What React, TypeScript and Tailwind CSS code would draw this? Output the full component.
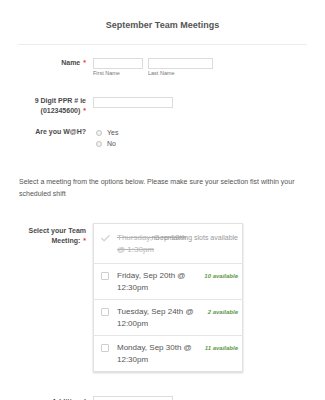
import { Check } from "lucide-react";

type Slot = {
  line1: string;
  line2: string;
  left?: string;
  disabled?: boolean;
};

const slots: Slot[] = [
  { line1: "Thursday, Sep 19th", line2: "@ 1:30pm", disabled: true },
  { line1: "Friday, Sep 20th @", line2: "12:30pm", left: "10 available" },
  { line1: "Tuesday, Sep 24th @", line2: "12:00pm", left: "2 available" },
  { line1: "Monday, Sep 30th @", line2: "12:30pm", left: "11 available" },
];

const Req = () => <span className="ml-[3px] text-[#e33]">*</span>;

const Radio = ({ label }: { label: string }) => (
  <label className="flex items-center gap-[5px] leading-[11px]">
    <span className="ml-[3px] h-[6px] w-[6px] rounded-full border border-[#c4c4c4] bg-[#f2f2f2]" />
    <span>{label}</span>
  </label>
);

const SlotRow = ({ slot, first }: { slot: Slot; first: boolean }) => (
  <div
    className={`relative flex items-start pl-[6px] pr-[4px] ${
      first ? "pt-[8px] pb-[7px]" : "border-t border-[#e6e6e6] pt-[6px] pb-[5px]"
    }`}
  >
    {slot.disabled ? (
      <Check size={11} strokeWidth={3} className="mt-[1px] shrink-0 text-[#d4d4d4]" />
    ) : (
      <span className="mt-[2px] ml-[1px] mr-[2px] h-[8px] w-[8px] shrink-0 rounded-[1px] border border-[#cfcfcf] bg-white" />
    )}
    <div
      className={`ml-[6px] flex-1 text-[8px] leading-[12px] ${
        slot.disabled ? "text-[#b5b5b5] line-through" : "text-[#555]"
      }`}
    >
      <div>{slot.line1}</div>
      <div>{slot.line2}</div>
    </div>
    {slot.left && (
      <span className="shrink-0 text-[6px] leading-[12px] font-bold italic text-[#5c9a48]">
        {slot.left}
      </span>
    )}
    {slot.disabled && (
      <span className="absolute right-[4px] top-[8px] text-[7px] leading-[12px] text-[#9a9a9a]">
        no remaining slots available
      </span>
    )}
  </div>
);

export default function App() {
  return (
    <div className="h-[400px] w-[325px] overflow-hidden bg-white font-['Liberation_Sans',Arial,sans-serif] text-[#555]">
      <h1 className="pt-[20px] text-center text-[9px] leading-[11px] font-bold text-[#555]">
        September Team Meetings
      </h1>
      <div className="mx-[18px] mt-[13px] h-px bg-[#ececec]" />

      <div className="mt-[13px] flex items-start pl-[18px]">
        <div className="w-[68px] text-right text-[7px] leading-[10px] font-bold text-[#4a4a4a]">
          Name
          <Req />
        </div>
        <div className="ml-[7px] flex gap-[5px]">
          <div>
            <div className="h-[11px] w-[50px] border border-[#dcdcdc]" />
            <div className="text-[5.5px] leading-[8px] text-[#777]">First Name</div>
          </div>
          <div>
            <div className="h-[11px] w-[65px] border border-[#dcdcdc]" />
            <div className="text-[5.5px] leading-[8px] text-[#777]">Last Name</div>
          </div>
        </div>
      </div>

      <div className="mt-[19px] flex items-start pl-[18px]">
        <div className="w-[68px] text-right text-[7px] leading-[10px] font-bold text-[#4a4a4a]">
          9 Digit PPR # ie (012345600)
          <Req />
        </div>
        <div className="ml-[7px] mt-[1px] h-[11px] w-[80px] border border-[#dcdcdc]" />
      </div>

      <div className="mt-[11px] flex items-start pl-[18px]">
        <div className="w-[68px] text-right text-[7px] leading-[10px] font-bold text-[#4a4a4a]">
          Are you W@H?
        </div>
        <div className="ml-[7px] text-[7px] text-[#555]">
          <Radio label="Yes" />
          <Radio label="No" />
        </div>
      </div>

      <p className="mt-[27px] px-[19px] text-[7px] leading-[12px] text-[#555]">
        Select a meeting from the options below. Please make sure your selection fist within your
        scheduled shift
      </p>

      <div className="mt-[23px] flex items-start pl-[18px]">
        <div className="w-[68px] pt-[3px] text-right text-[7px] leading-[10px] font-bold text-[#4a4a4a]">
          Select your Team Meeting:
          <Req />
        </div>
        <div className="ml-[7px] w-[150px] border border-[#e2e2e2] bg-white shadow-[0_1px_2px_rgba(0,0,0,0.18)]">
          {slots.map((s, i) => (
            <SlotRow key={s.line1} slot={s} first={i === 0} />
          ))}
        </div>
      </div>

      <div className="mt-[24px] flex items-start pl-[18px]">
        <div className="w-[68px] pt-[1px] text-right text-[7px] leading-[10px] font-bold text-[#4a4a4a]">
          Additional
        </div>
        <div className="ml-[7px] h-[11px] w-[80px] border border-[#dcdcdc]" />
      </div>
    </div>
  );
}
